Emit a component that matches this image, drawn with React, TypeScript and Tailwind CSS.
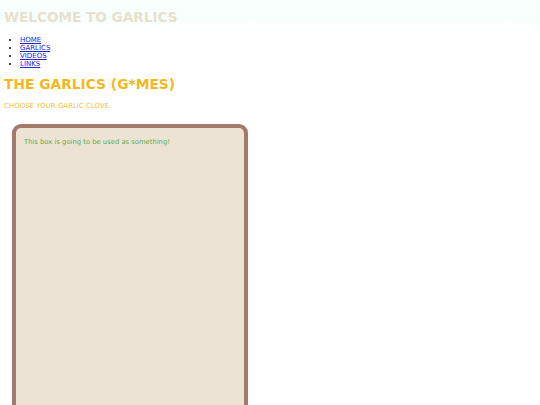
import React from 'react';

const links = ['HOME', 'GARLICS', 'VIDEOS', 'LINKS'];

const App: React.FC = () => {
  return (
    <div className="min-h-[405px] bg-white font-['DejaVu_Sans',sans-serif]">
      <div className="bg-gradient-to-b from-[#f9fffd] via-[#f7fffc] to-white pt-[8px] pb-[8px] px-[4px]">
        <h1 className="text-[13.6px] leading-[18px] font-bold text-[#e8dfcc]">WELCOME TO GARLICS</h1>
      </div>

      <ul className="list-disc pl-[20px] mt-[2px] text-[7px] leading-[8px]">
        {links.map((l) => (
          <li key={l}>
            <a href="#" className="text-[#2222dd] underline">{l}</a>
          </li>
        ))}
      </ul>

      <h2 className="px-[4px] mt-[7px] text-[13.8px] leading-[18px] font-bold text-[#f2b824]">THE GARLICS (G*MES)</h2>
      <p className="px-[4px] mt-[9px] text-[7px] leading-[9px] text-[#f0bf45]">CHOOSE YOUR GARLIC CLOVE.</p>

      <div className="ml-[12px] mt-[13px] w-[236px] h-[290px] border-[4px] border-[#a5796a] rounded-[9px] bg-[#ece3d4] px-[8px] pt-[10px]">
        <p className="text-[6.8px] leading-[8px] text-[#5fab4a]">This box is going to be used as something!</p>
      </div>
    </div>
  );
};

export default App;
